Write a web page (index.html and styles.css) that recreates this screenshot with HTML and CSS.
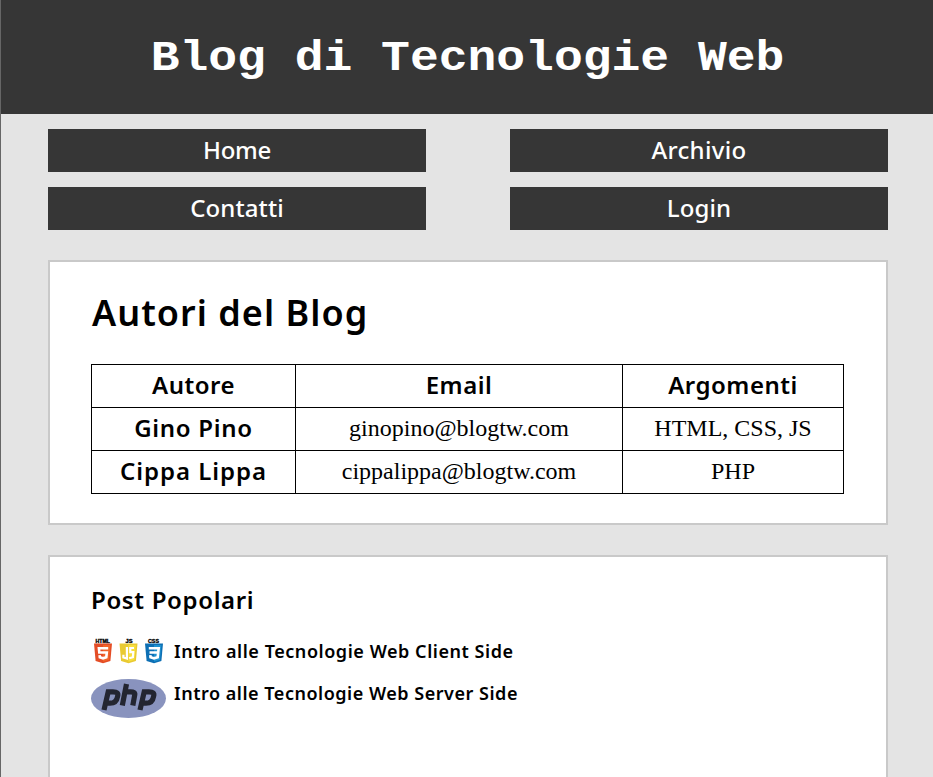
FILE: index.html
```html
<!DOCTYPE html>
<html lang="it">
<head>
<meta charset="utf-8">
<title>Blog di Tecnologie Web</title>
<link rel="stylesheet" href="styles.css">
</head>
<body>
<header><h1>Blog di Tecnologie Web</h1></header>
<nav>
  <a class="home">Home</a>
  <a class="archive">Archivio</a>
  <a class="contacts">Contatti</a>
  <a class="login">Login</a>
</nav>
<main>
  <section class="authors">
    <h2>Autori del Blog</h2>
    <table>
      <tr><th class="c1">Autore</th><th class="c2">Email</th><th>Argomenti</th></tr>
      <tr><th class="gino">Gino Pino</th><td>ginopino@blogtw.com</td><td>HTML, CSS, JS</td></tr>
      <tr><th class="cippa">Cippa Lippa</th><td>cippalippa@blogtw.com</td><td>PHP</td></tr>
    </table>
  </section>
  <section class="popular">
    <h3>Post Popolari</h3>
    <div class="post">
      <svg class="thumb" width="75" height="38" viewBox="0 0 75 38">
        <g class="label">
          <text x="4.500" y="5.500" textLength="14.500" lengthAdjust="spacingAndGlyphs">HTML</text>
          <text x="34.500" y="5.500" textLength="7" lengthAdjust="spacingAndGlyphs">JS</text>
          <text x="57" y="5.500" textLength="11" lengthAdjust="spacingAndGlyphs">CSS</text>
        </g>
        <path fill="#e44d26" d="M3 6.500H21L19.400 24L12 26.200L4.600 24Z"/>
        <path fill="#f16529" d="M12 8H19.400L18 22.800L12 24.700Z"/>
        <path fill="none" stroke="#fff" stroke-width="2.600" d="M17.200 11.200H7.900L8.300 15.500H15.800L15.300 20.200L12 21.300L8.800 20.200L8.600 18.200"/>
        <path fill="#e9ca32" d="M28.500 6.500H46.500L44.900 24L37.500 26.200L30.100 24Z"/>
        <path fill="#f7df3e" d="M37.500 8H44.900L43.500 22.800L37.500 24.700Z"/>
        <path fill="none" stroke="#fff" stroke-width="2.200" d="M35.900 10V21.500L32.400 20.400V17.800M43 11H39.300V15.200H42.300L41.900 20.200L38.200 21.300"/>
        <path fill="#0d6fb4" d="M54 6.500H72L70.400 24L63 26.200L55.600 24Z"/>
        <path fill="#1d91cf" d="M63 8H70.400L69 22.800L63 24.700Z"/>
        <path fill="none" stroke="#fff" stroke-width="2.600" d="M57.800 11.200H67.700L67.200 15.500H58.500M67.200 15.500L66.700 20.200L63 21.300L59.500 20.200L59.300 18.200"/>
      </svg>
      <a class="client">Intro alle Tecnologie Web Client Side</a>
    </div>
    <div class="post">
      <svg class="thumb" width="75" height="39" viewBox="0 0 75 39">
        <ellipse cx="37.500" cy="19.500" rx="37.500" ry="19.500" fill="#8993be"/>
        <g fill="none" stroke="#232531" stroke-width="5.200">
          <path d="M13 31L17.200 12.800H22Q28 12.800 26.600 17.300Q25.500 24.200 19 24.200H14.500"/>
          <path d="M35.500 5L31.300 26.500M34 12.800H39.500Q44.500 12.800 43.700 16L41.800 26.500"/>
          <path d="M49 31L53.200 12.800H58Q64 12.800 62.600 17.300Q61.500 24.200 55 24.200H50.500"/>
        </g>
      </svg>
      <a class="server">Intro alle Tecnologie Web Server Side</a>
    </div>
  </section>
</main>
</body>
</html>
```

FILE: styles.css
```css
* { box-sizing: border-box; }
html { background: #e4e4e4; }
body {
  margin: 0;
  height: 777px;
  border-left: 1px solid #666;
  background: #e4e4e4;
  color: #000;
  font-family: "Noto Sans", sans-serif;
}
header { height: 114px; background: #363636; color: #fff; padding-top: 30px; }
h1 {
  margin: 0;
  text-align: center;
  font: bold 48px/54px "Liberation Mono", monospace;
  padding-left: 1px;
  transform: scaleY(.88);
  transform-origin: 0 41px;
}
nav {
  display: grid;
  grid-template-columns: 378px 378px;
  gap: 15px 84px;
  margin: 15px 0 0 47px;
}
nav a {
  height: 43px;
  background: #363636;
  color: #fff;
  text-align: center;
  font-size: 24px;
  font-weight: 500;
  line-height: 41px;
  letter-spacing: .1px;
}
nav .home { letter-spacing: -.3px; }
nav .archive { letter-spacing: .3px; }
main { margin: 30px 0 0 47px; width: 840px; }
section { background: #fff; border: 2px solid #c9c9c9; padding: 0 41px; }
.authors { height: 265px; margin-bottom: 30px; }
.popular { height: 222px; border-bottom: 0; }
h2 {
  margin: 0;
  padding: 26px 0 0 1px;
  font-size: 36px;
  line-height: 50px;
  font-weight: 600;
  letter-spacing: 1.02px;
}
table {
  margin-top: 26px;
  width: 753px;
  table-layout: fixed;
  border-collapse: collapse;
}
th, td { height: 43px; padding: 0 0 2px; border: 1px solid #000; text-align: center; }
th { font-size: 24px; line-height: 36px; font-weight: 600; letter-spacing: .5px; }
td { font: 24px/36px "Liberation Serif", serif; }
.c1 { width: 204px; }
.c2 { width: 327px; }
.gino { letter-spacing: .7px; }
.cippa { letter-spacing: .95px; }
h3 {
  margin: 0;
  padding: 26px 0 0;
  font-size: 24px;
  line-height: 34px;
  font-weight: 600;
  letter-spacing: .65px;
}
.post { display: flex; height: 42px; align-items: flex-start; gap: 8px; }
h3 + .post { margin-top: 20px; }
.thumb { display: block; flex: none; }
.post a { padding-top: 1px; font-size: 18px; line-height: 26px; font-weight: 600; white-space: nowrap; letter-spacing: .55px; }
.post .server { letter-spacing: .52px; }
.label { font: bold 4.5px "Liberation Sans", sans-serif; stroke: #000; stroke-width: .3; }
```
